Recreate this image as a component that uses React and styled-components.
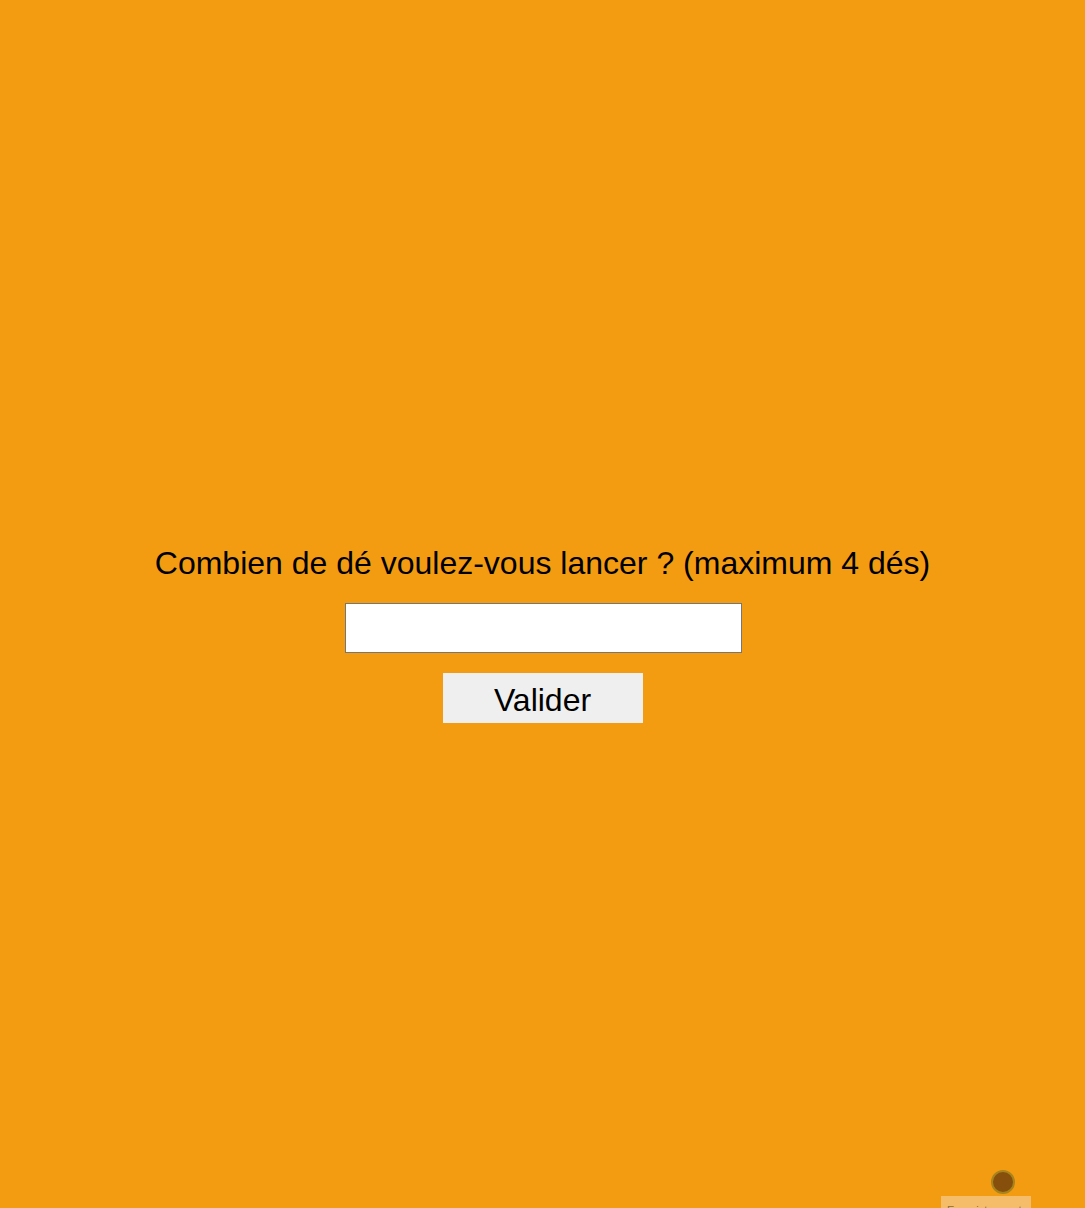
import React from 'react';
import styled, { createGlobalStyle } from 'styled-components';

const GlobalStyle = createGlobalStyle`
  html, body {
    margin: 0;
    padding: 0;
    background: #f39c12;
    font-family: "Liberation Sans", Arial, sans-serif;
  }
`;

const Page = styled.main`
  position: relative;
  min-height: 1208px;
  overflow: hidden;
  display: flex;
  flex-direction: column;
  align-items: center;
  padding-top: 545px;
  box-sizing: border-box;
`;

const Question = styled.label`
  font-size: 32px;
  color: #000;
  margin-bottom: 21px;
`;

const NumberInput = styled.input`
  width: 397px;
  height: 50px;
  margin-left: 2px;
  box-sizing: border-box;
  border: 1px solid #767676;
  background: #fff;
  font-size: 28px;
  font-family: inherit;
  padding: 0 8px;
  outline: none;
`;

const SubmitButton = styled.button`
  margin-top: 20px;
  width: 200px;
  height: 50px;
  border: none;
  background: #efefef;
  color: #000;
  font-size: 32px;
  font-family: inherit;
  padding: 4px 0 0;
  cursor: pointer;
`;

const RecordDot = styled.div`
  position: absolute;
  left: 991px;
  top: 1170px;
  width: 24px;
  height: 24px;
  box-sizing: border-box;
  border-radius: 50%;
  background: #86500c;
  border: 2px solid #a8841c;
`;

const RecordTag = styled.div`
  position: absolute;
  left: 941px;
  top: 1196px;
  width: 90px;
  height: 30px;
  background: #f5bd6a;
  color: #8a6a3a;
  font-size: 11px;
  padding: 8px 6px;
  box-sizing: border-box;
  white-space: nowrap;
`;

export default function App() {
  return (
    <>
      <GlobalStyle />
      <Page>
        <Question htmlFor="nbDes">Combien de dé voulez-vous lancer ? (maximum 4 dés)</Question>
        <NumberInput id="nbDes" type="text" />
        <SubmitButton type="button">Valider</SubmitButton>
        <RecordDot />
        <RecordTag>Enregistrement</RecordTag>
      </Page>
    </>
  );
}
